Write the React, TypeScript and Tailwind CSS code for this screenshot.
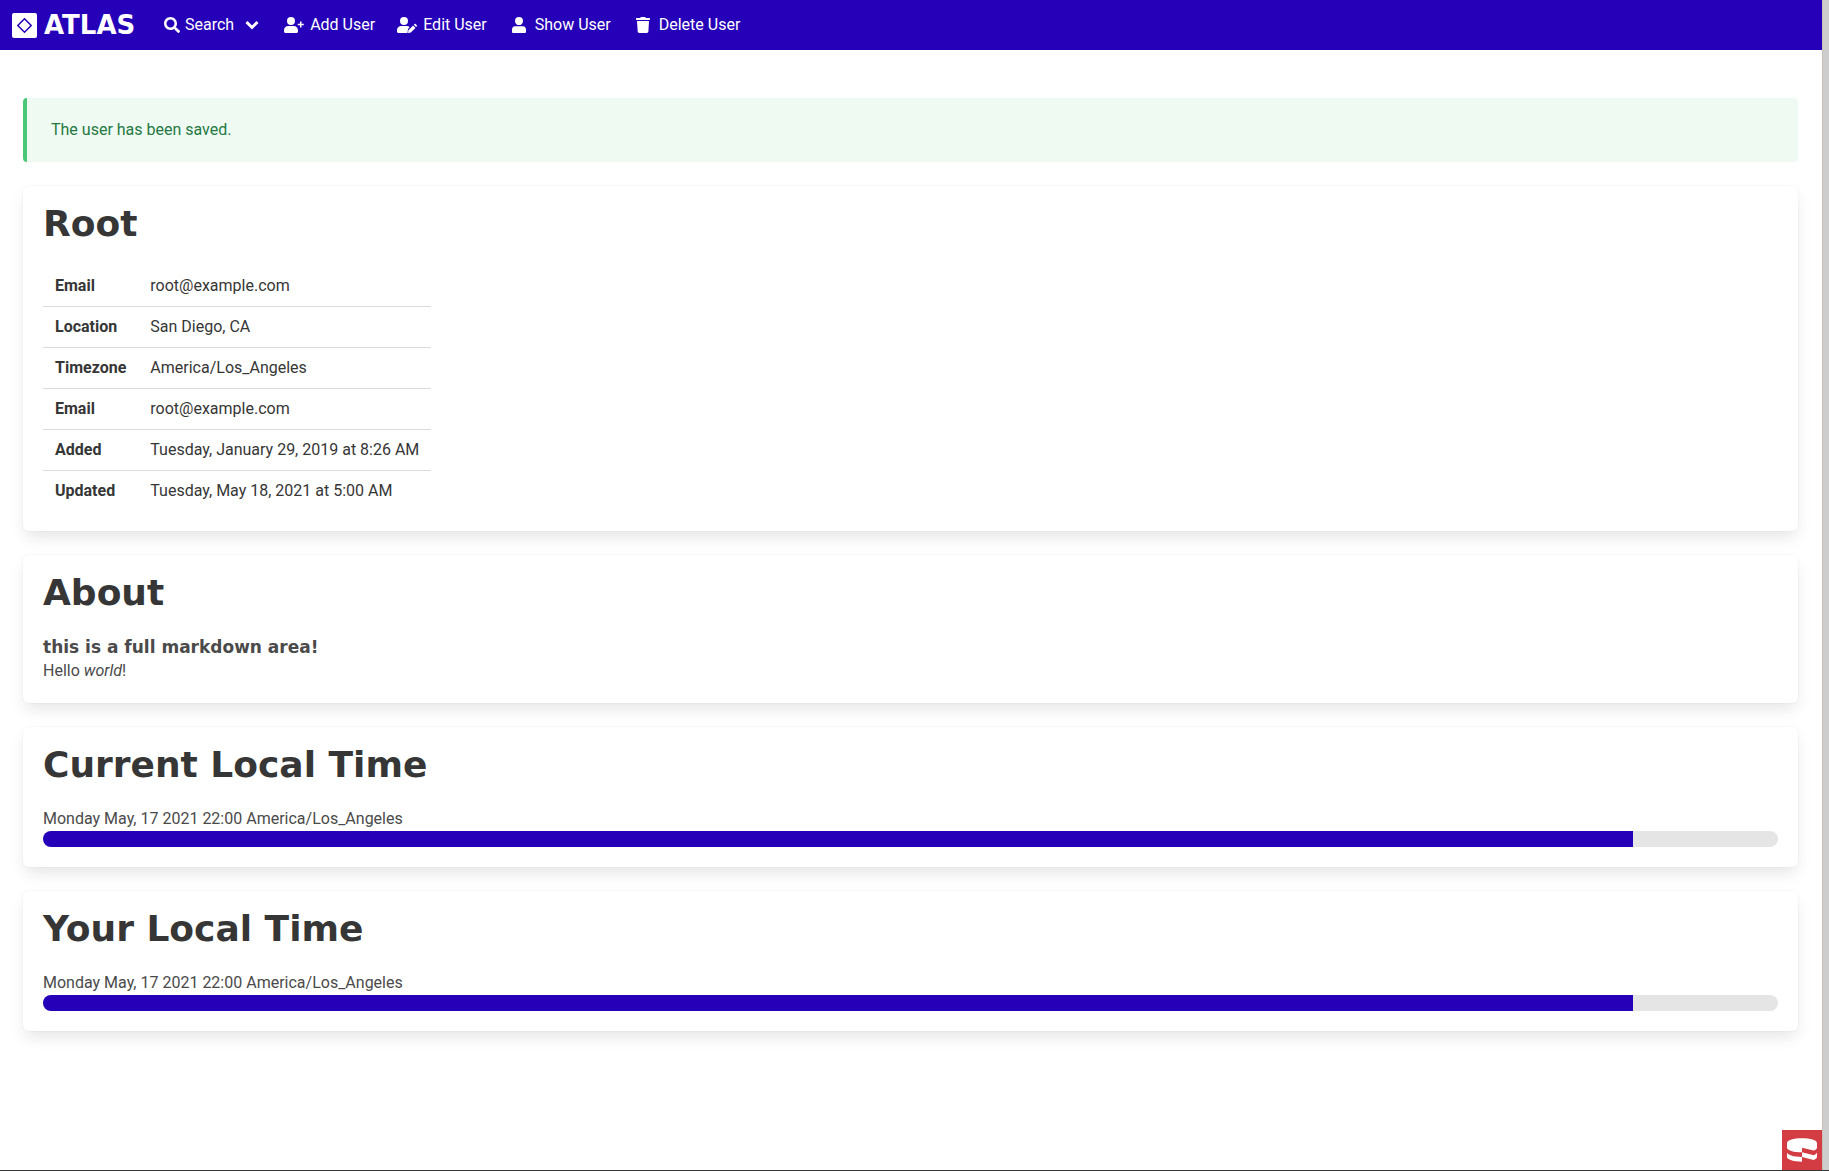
import type { ReactNode } from "react";
import { FaSearch } from "react-icons/fa";
import { SiCakephp } from "react-icons/si";

const headingFont = "font-['DejaVu_Sans',sans-serif] font-bold";

function Icon({ viewBox, path, className }: { viewBox: string; path: string; className: string }) {
  return (
    <svg viewBox={viewBox} className={className} fill="currentColor" aria-hidden="true">
      <path d={path} />
    </svg>
  );
}

const PERSON =
  "M8 0a4 4 0 0 1 4 4a4 4 0 0 1-4 4.1a4 4 0 0 1-4-4.1a4 4 0 0 1 4-4zM4 9.2h8c1.800 0 3 1.300 3 3.200v2.300c0 .8-.5 1.300-1.300 1.300H2.300c-.8 0-1.300-.5-1.300-1.300v-2.300c0-1.900 1.200-3.200 3-3.200z";

function NavLink({ icon, children }: { icon: ReactNode; children: ReactNode }) {
  return (
    <a href="#" className="flex h-full items-center px-[10px] hover:bg-[#2200a0]">
      <span className="mr-1 flex w-6 items-center justify-center">{icon}</span>
      {children}
    </a>
  );
}

function Card({ title, children }: { title: string; children: ReactNode }) {
  return (
    <section className="mb-6 rounded-md bg-white p-5 text-[#4a4a4a] shadow-[0_8px_16px_-2px_rgba(10,10,10,0.1),0_0_0_1px_rgba(10,10,10,0.02)]">
      <h1 className={`${headingFont} mb-6 text-4xl leading-9 text-[#363636]`}>{title}</h1>
      {children}
    </section>
  );
}

function Bar({ value }: { value: number }) {
  return (
    <div
      role="progressbar"
      aria-label="Minutes of the day"
      aria-valuenow={value}
      className="h-4 overflow-hidden rounded-full bg-[#e5e5e5]"
    >
      <div className="h-full bg-[#2600b8]" style={{ width: `${value}%` }} />
    </div>
  );
}

const rows = [
  ["Email", "root@example.com"],
  ["Location", "San Diego, CA"],
  ["Timezone", "America/Los_Angeles"],
  ["Email", "root@example.com"],
  ["Added", "Tuesday, January 29, 2019 at 8:26 AM"],
  ["Updated", "Tuesday, May 18, 2021 at 5:00 AM"],
];

export default function App() {
  return (
    <div className="flex min-h-screen border-b border-[#363636] bg-white font-[Roboto,sans-serif] text-base">
      <div className="min-w-0 flex-1">
        <nav className="flex h-[50px] items-center bg-[#2600b8] text-white">
          <a href="#" className="flex h-full items-center gap-[7px] px-3">
            <svg viewBox="0 0 25 25" className="size-[25px]" aria-hidden="true">
              <rect width="25" height="25" rx="2" fill="#fff" />
              <path d="M12.500 5.800 19.200 12.500 12.500 19.200 5.800 12.500z" fill="none" stroke="#2600b8" strokeWidth="1.500" />
            </svg>
            <span className={`${headingFont} w-[95px] text-[26px]`}>ATLAS</span>
          </a>
          <button type="button" className="ml-[13px] mr-[13px] flex h-full items-center">
            <FaSearch className="mr-[5px] size-4" />
            Search
            <svg viewBox="0 0 14 14" className="ml-[11px] size-[14px]" fill="none" stroke="currentColor" strokeWidth="3" aria-hidden="true">
              <path d="M1.500 4 7 9.500 12.500 4" />
            </svg>
          </button>
          <NavLink
            icon={
              <Icon
                className="h-4 w-5"
                viewBox="0 0 20 16"
                path="M7 0a4 4 0 0 1 0 8a4 4 0 0 1 0-8zM4.200 9h5.600c2.400 0 4.200 1.800 4.200 4.200v1.300c0 .8-.7 1.500-1.500 1.500h-11C.7 16 0 15.300 0 14.500v-1.300C0 10.800 1.800 9 4.200 9zM16 4.500h1.500v2.250h2.250v1.500H17.500v2.250H16V8.250h-2.250v-1.500H16z"
              />
            }
          >
            Add User
          </NavLink>
          <NavLink
            icon={
              <Icon
                className="h-4 w-5"
                viewBox="0 0 20 16"
                path="M7 0a4 4 0 0 1 0 8a4 4 0 0 1 0-8zM4.200 9h5.600c1.100 0 2.100.4 2.800 1L11 12.200l-.5 3.800h-9C.7 16 0 15.300 0 14.500v-1.300C0 10.800 1.800 9 4.200 9zM16.100 8.500l2.400 2.400-4.700 4.700-2.300.4c-.3 0-.5-.2-.4-.5l.3-2.300zM16.800 7.800l.8-.8c.3-.3.7-.3 1 0l1.200 1.200c.3.3.3.700 0 1l-.7.900z"
              />
            }
          >
            Edit User
          </NavLink>
          <NavLink icon={<Icon className="size-4" viewBox="0 0 16 16" path={PERSON} />}>Show User</NavLink>
          <NavLink
            icon={
              <Icon
                className="h-4 w-[14px]"
                viewBox="0 0 14 16"
                path="M.5 1h3.750l.3-.6c.1-.2.300-.4.600-.4h3.700c.3 0 .5.200.6.400l.3.600h3.750c.3 0 .5.200.5.500v1c0 .3-.2.500-.5.500H.5C.2 3 0 2.800 0 2.500v-1C0 1.200.2 1 .5 1zM1 4h12l-.6 10.600c-.1.800-.7 1.400-1.500 1.400H3.200c-.8 0-1.400-.6-1.500-1.400z"
              />
            }
          >
            Delete User
          </NavLink>
        </nav>
        <main className="pl-[23px] pr-6 pt-12">
          <div role="status" className="mb-6 rounded border-l-4 border-[#48c774] bg-[#effaf3] px-6 py-5 text-[#257942]">
            The user has been saved.
          </div>
          <Card title="Root">
            <table className="border-collapse text-left text-[#363636]">
              <tbody>
                {rows.map(([label, value], i) => (
                  <tr key={i} className="border-b border-[#dbdbdb] last:border-b-0">
                    <th scope="row" className="px-3 py-2 font-bold">{label}</th>
                    <td className="px-3 py-2">{value}</td>
                  </tr>
                ))}
              </tbody>
            </table>
          </Card>
          <Card title="About">
            <h2 className={`${headingFont} text-[17px] leading-6`}>this is a full markdown area!</h2>
            <p>
              Hello <em>world</em>!
            </p>
          </Card>
          <Card title="Current Local Time">
            <p>Monday May, 17 2021 22:00 America/Los_Angeles</p>
            <Bar value={91.66} />
          </Card>
          <Card title="Your Local Time">
            <p>Monday May, 17 2021 22:00 America/Los_Angeles</p>
            <Bar value={91.66} />
          </Card>
        </main>
      </div>
      <div className="w-[7px] shrink-0 border-l border-[#c8c0b8] bg-[#cdcdcd]" />
      <button
        type="button"
        aria-label="Open debug toolbar"
        className="fixed bottom-px right-[7px] flex size-10 items-center justify-center bg-[#d33c43] text-white"
      >
        <SiCakephp className="size-[30px]" />
      </button>
    </div>
  );
}
